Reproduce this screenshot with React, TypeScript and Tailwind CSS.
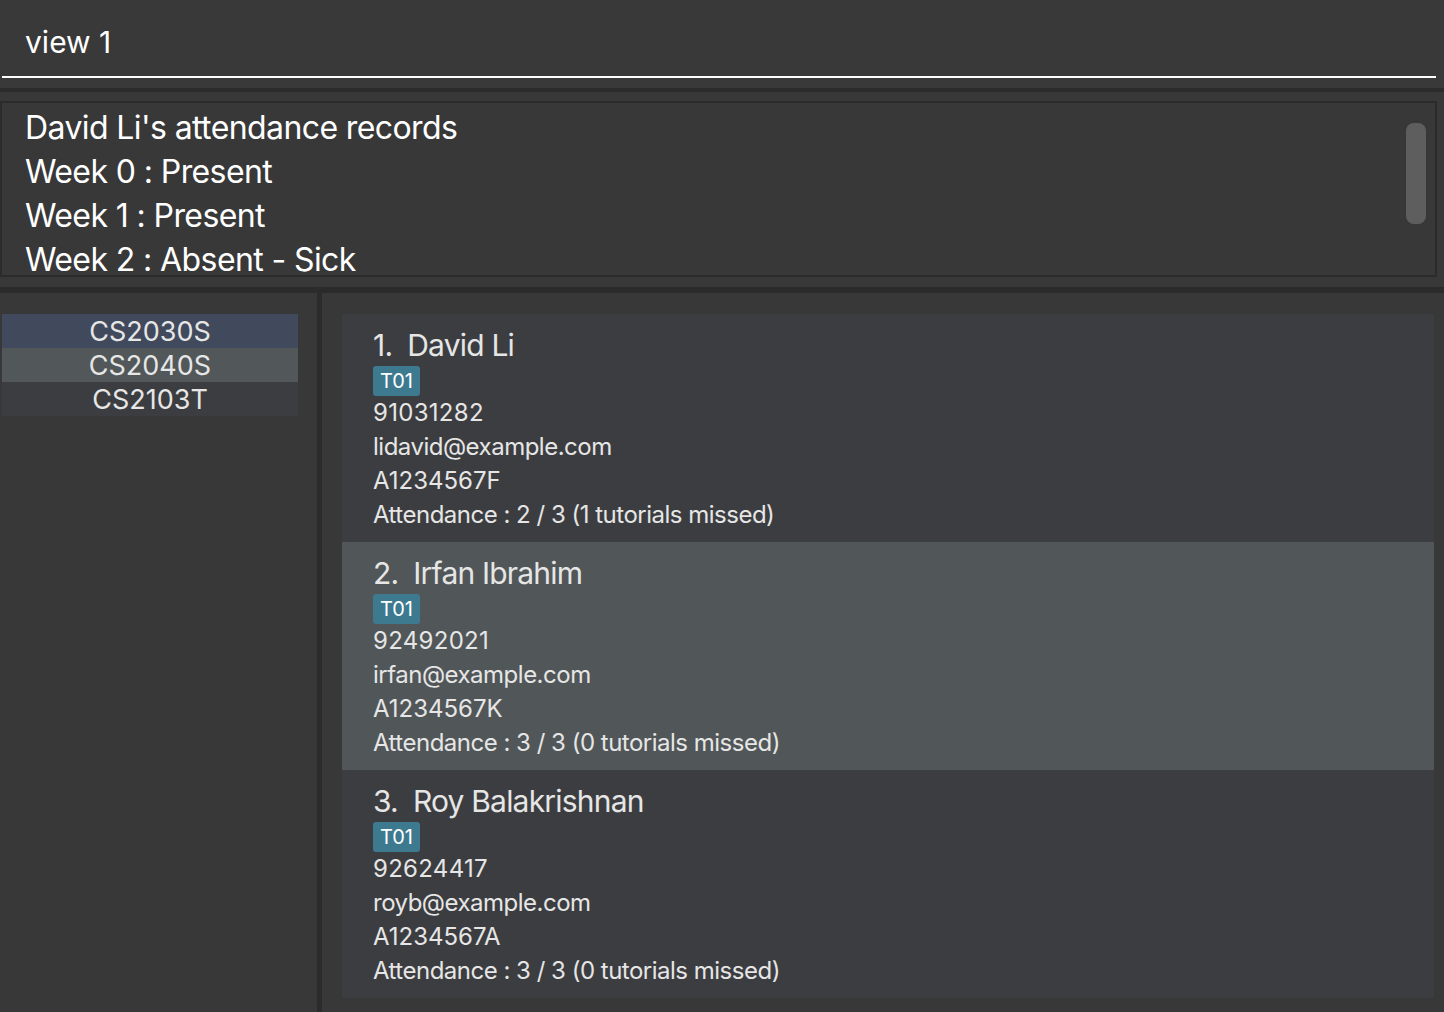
import React from 'react';

interface Student {
  name: string;
  tag: string;
  phone: string;
  email: string;
  matric: string;
  attendance: string;
}

const students: Student[] = [
  {
    name: 'David Li',
    tag: 'T01',
    phone: '91031282',
    email: 'lidavid@example.com',
    matric: 'A1234567F',
    attendance: 'Attendance : 2 / 3 (1 tutorials missed)',
  },
  {
    name: 'Irfan Ibrahim',
    tag: 'T01',
    phone: '92492021',
    email: 'irfan@example.com',
    matric: 'A1234567K',
    attendance: 'Attendance : 3 / 3 (0 tutorials missed)',
  },
  {
    name: 'Roy Balakrishnan',
    tag: 'T01',
    phone: '92624417',
    email: 'royb@example.com',
    matric: 'A1234567A',
    attendance: 'Attendance : 3 / 3 (0 tutorials missed)',
  },
];

const modules = [
  { code: 'CS2030S', bg: 'bg-[#414a5c]' },
  { code: 'CS2040S', bg: 'bg-[#525759]' },
  { code: 'CS2103T', bg: 'bg-[#3c3d40]' },
];

const records = [
  "David Li's attendance records",
  'Week 0 : Present',
  'Week 1 : Present',
  'Week 2 : Absent - Sick',
];

function StudentCard({ student, index, selected }: { student: Student; index: number; selected: boolean }) {
  return (
    <div className={`h-[228px] pl-[31px] pt-[13px] text-[#e6e6e6] ${selected ? 'bg-[#515658]' : 'bg-[#3c3d40]'}`}>
      <div className="flex h-[36px] items-center text-[30px] leading-[36px] tracking-[-0.8px]">
        <span className="pr-[15px]">{index + 1}.</span>
        <span>{student.name}</span>
      </div>
      <div className="mt-[3px] flex">
        <span className="flex h-[30px] items-center rounded-[3px] bg-[#3e7a8f] px-[7px] text-[20px] text-white">
          {student.tag}
        </span>
      </div>
      <div className="h-[34px] text-[24px] leading-[34px] tracking-[0.3px]">{student.phone}</div>
      <div className="h-[34px] text-[24px] leading-[34px] tracking-[-0.5px]">{student.email}</div>
      <div className="h-[34px] text-[24px] leading-[34px]">{student.matric}</div>
      <div className="h-[34px] text-[24px] leading-[34px] tracking-[-0.5px]">{student.attendance}</div>
    </div>
  );
}

export default function App() {
  return (
    <div className="flex h-[1012px] w-[1444px] flex-col overflow-hidden bg-[#383838] font-['Inter',sans-serif]">
      {/* command box */}
      <div className="h-[88px] shrink-0 bg-[#393939] px-[2px]">
        <div className="mr-[6px] h-[78px] border-b-2 border-white pl-[23px] pt-[20px] text-[30px] leading-[44px] text-white">
          view 1
        </div>
      </div>
      <div className="h-[4px] shrink-0 bg-[#2b2b2b]" />

      {/* result display */}
      <div className="h-[195px] shrink-0 pr-[7px] pt-[9px]">
        <div className="relative h-[176px] overflow-hidden border-2 border-[#2b2b2b] bg-[#383838] pl-[23px] pt-[3px] text-white">
          {records.map((line) => (
            <div key={line} className="h-[44px] text-[32px] leading-[44px] tracking-[-0.6px]">
              {line}
            </div>
          ))}
          <div className="absolute right-[9px] top-[20px] h-[101px] w-[20px] rounded-[8px] bg-[#5e5e5e]" />
        </div>
      </div>
      <div className="h-[6px] shrink-0 bg-[#2b2b2b]" />

      {/* main panels */}
      <div className="flex min-h-0 flex-1">
        <div className="w-[317px] shrink-0 pl-[2px] pt-[21px]">
          <div className="w-[296px]">
            {modules.map((m) => (
              <div
                key={m.code}
                className={`flex h-[34px] items-center justify-center pt-[2px] text-[27px] text-[#e6e6e6] ${m.bg}`}
              >
                {m.code}
              </div>
            ))}
          </div>
        </div>
        <div className="w-[5px] shrink-0 bg-[#2b2b2b]" />
        <div className="flex-1 pl-[20px] pr-[10px] pt-[21px]">
          {students.map((s, i) => (
            <StudentCard key={s.name} student={s} index={i} selected={i === 1} />
          ))}
        </div>
      </div>
    </div>
  );
}
